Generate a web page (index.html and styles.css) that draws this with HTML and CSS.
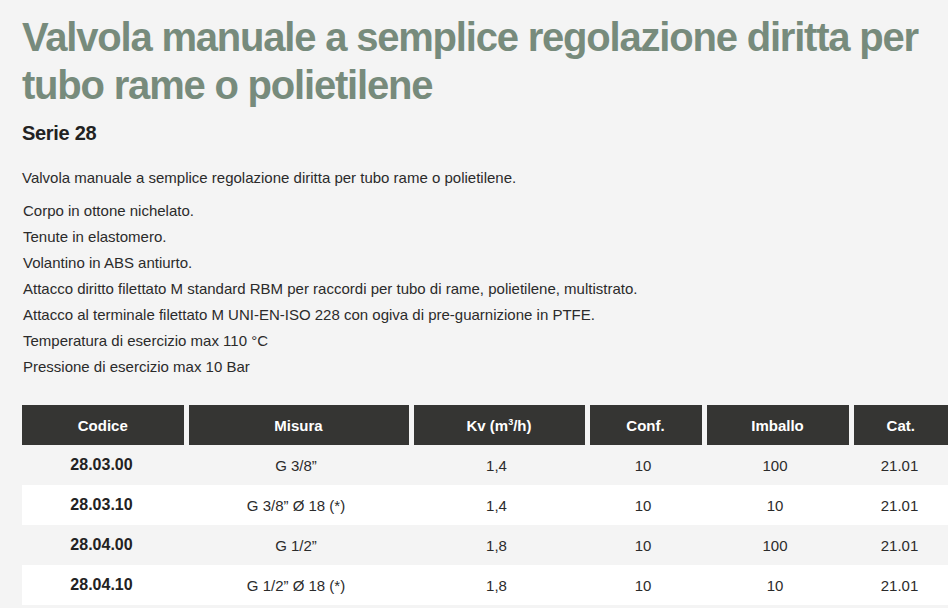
FILE: index.html
```html
<!DOCTYPE html>
<html lang="it">
<head>
<meta charset="utf-8">
<title>Valvola manuale a semplice regolazione diritta</title>
<link rel="stylesheet" href="styles.css">
</head>
<body>
<main class="page">
  <h1 class="title">Valvola manuale a semplice regolazione diritta per tubo rame o polietilene</h1>
  <h2 class="series">Serie 28</h2>
  <p class="intro">Valvola manuale a semplice regolazione diritta per tubo rame o polietilene.</p>
  <ul class="specs">
    <li>Corpo in ottone nichelato.</li>
    <li>Tenute in elastomero.</li>
    <li>Volantino in ABS antiurto.</li>
    <li>Attacco diritto filettato M standard RBM per raccordi per tubo di rame, polietilene, multistrato.</li>
    <li>Attacco al terminale filettato M UNI-EN-ISO 228 con ogiva di pre-guarnizione in PTFE.</li>
    <li>Temperatura di esercizio max 110 °C</li>
    <li>Pressione di esercizio max 10 Bar</li>
  </ul>
  <table class="products">
    <colgroup>
      <col class="c-code"><col class="c-size"><col class="c-kv"><col class="c-conf"><col class="c-pack"><col class="c-cat">
    </colgroup>
    <thead>
      <tr>
        <th>Codice</th>
        <th>Misura</th>
        <th>Kv (m<sup>3</sup>/h)</th>
        <th>Conf.</th>
        <th>Imballo</th>
        <th>Cat.</th>
      </tr>
    </thead>
    <tbody>
      <tr><td class="code">28.03.00</td><td>G 3/8”</td><td>1,4</td><td>10</td><td>100</td><td>21.01</td></tr>
      <tr><td class="code">28.03.10</td><td>G 3/8” Ø 18 (*)</td><td>1,4</td><td>10</td><td>10</td><td>21.01</td></tr>
      <tr><td class="code">28.04.00</td><td>G 1/2”</td><td>1,8</td><td>10</td><td>100</td><td>21.01</td></tr>
      <tr><td class="code">28.04.10</td><td>G 1/2” Ø 18 (*)</td><td>1,8</td><td>10</td><td>10</td><td>21.01</td></tr>
    </tbody>
  </table>
</main>
</body>
</html>
```

FILE: styles.css
```css
* { box-sizing: border-box; }

html, body {
  margin: 0;
  padding: 0;
  background: #f4f4f4;
  overflow: hidden;
}

body {
  font-family: "Liberation Sans", Arial, sans-serif;
  color: #2b2b2b;
}

.page {
  width: 948px;
  padding: 13px 0 0 22px;
}

.title {
  margin: 0;
  font-size: 40px;
  line-height: 48px;
  font-weight: 700;
  letter-spacing: -1.2px;
  color: #778b7c;
}

.series {
  margin: 12px 0 0;
  font-size: 20px;
  line-height: 24px;
  font-weight: 700;
  letter-spacing: -0.3px;
  color: #222;
}

.intro {
  margin: 20px 0 0;
  font-size: 15px;
  line-height: 26px;
  color: #2b2b2b;
}

.specs {
  list-style: none;
  margin: 7px 0 0;
  padding: 0 0 0 1px;
  font-size: 15px;
  line-height: 26px;
  color: #2b2b2b;
}

.products {
  margin-top: 25px;
  width: 926px;
  border-collapse: collapse;
  table-layout: fixed;
  font-size: 15px;
}

.c-code { width: 164px; }
.c-size { width: 225px; }
.c-kv { width: 176px; }
.c-conf { width: 117px; }
.c-pack { width: 147px; }
.c-cat { width: 97px; }

.products th {
  height: 40px;
  padding: 0;
  background: #353533;
  color: #fff;
  font-weight: 700;
  text-align: center;
  border-right: 5px solid #f4f4f4;
}

.products th:last-child { border-right: 0; }

.products th sup {
  font-size: 9px;
  line-height: 0;
  vertical-align: 6px;
}

.products td {
  height: 40px;
  padding: 0 5px 0 0;
  text-align: center;
  color: #2b2b2b;
}

.products td:last-child { padding-right: 0; }

.products tbody tr:nth-child(even) { background: #fff; }

.products td.code {
  font-weight: 700;
  font-size: 16px;
  color: #222;
}
```
